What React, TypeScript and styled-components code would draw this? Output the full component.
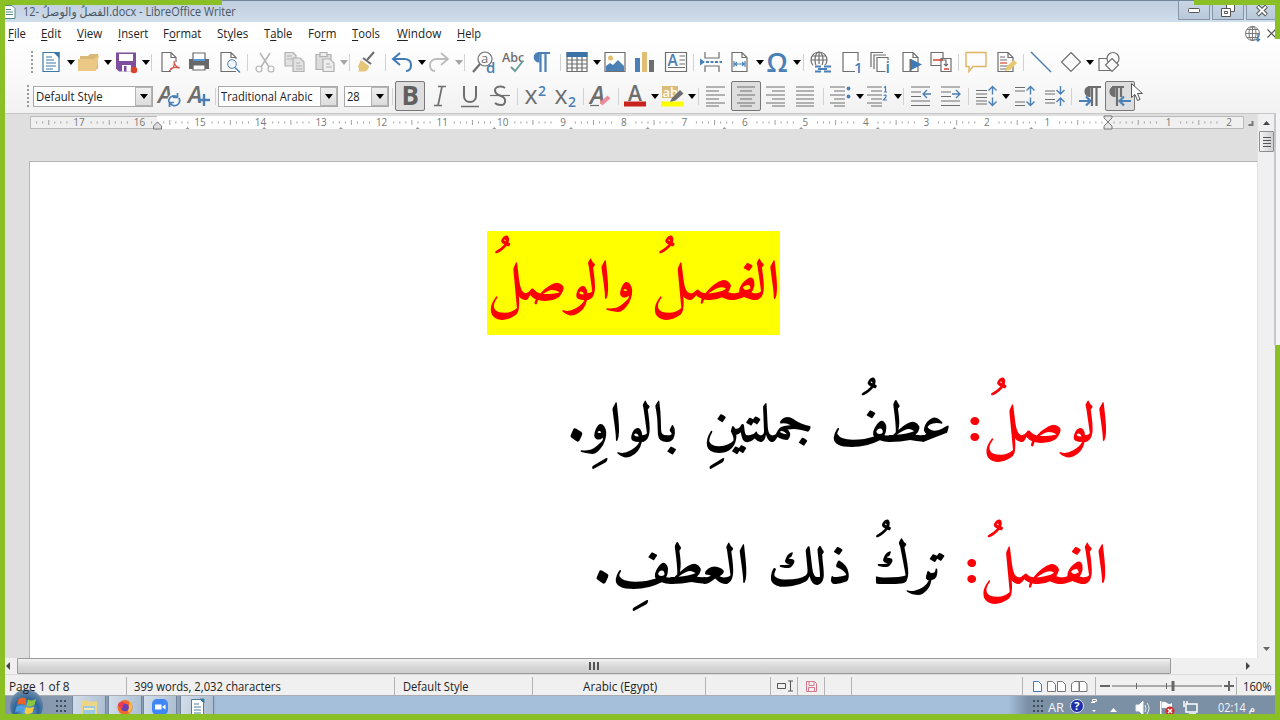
import React, { ReactNode, useLayoutEffect, useRef, useState } from "react";
import styled, { createGlobalStyle, css } from "styled-components";

const GREEN = "#8abf26";
const GREY = "#6e6e6e";
const BLUE = "#4a80b5";

const Global = createGlobalStyle`
  * { box-sizing: border-box; }
  body { margin: 0; background: #fff; overflow: hidden; }
  #root { font-family: "Open Sans", "Noto Sans", "DejaVu Sans", sans-serif; font-size: 12px; color: #222; }
  svg { display: block; overflow: visible; }
`;

/* ---------- text that is squeezed to a given width ---------- */
const FitBox = styled.span<{ $w: number; $rtl?: boolean }>`
  display: inline-block;
  flex: none;
  width: ${(p) => p.$w}px;
  direction: ${(p) => (p.$rtl ? "rtl" : "ltr")};
  white-space: nowrap;
`;
const FitInner = styled.span<{ $rtl?: boolean }>`
  display: inline-block;
  transform-origin: ${(p) => (p.$rtl ? "right" : "left")} center;
`;
const Fit = ({ w, rtl, children }: { w: number; rtl?: boolean; children: ReactNode }) => {
  const ref = useRef<HTMLSpanElement>(null);
  const [scale, setScale] = useState(1);
  useLayoutEffect(() => {
    if (ref.current) setScale(w / ref.current.offsetWidth);
  }, [w]);
  return (
    <FitBox $w={w} $rtl={rtl}>
      <FitInner ref={ref} $rtl={rtl} style={{ transform: `scaleX(${scale})` }}>{children}</FitInner>
    </FitBox>
  );
};

/* ---------- rows whose parts follow each other with measured gaps ---------- */
type Part = { c: number; w: number; el: ReactNode };
const Slot = styled.div<{ $w: number; $gap: number }>`
  flex: none;
  width: ${(p) => p.$w}px;
  margin-left: ${(p) => p.$gap}px;
  display: flex;
  align-items: center;
  justify-content: center;
`;
const Parts = ({ from, parts }: { from: number; parts: Part[] }) => {
  let end = from;
  return (
    <>
      {parts.map((p, i) => {
        const gap = p.c - p.w / 2 - end;
        end = p.c + p.w / 2;
        return <Slot key={i} $w={p.w} $gap={gap}>{p.el}</Slot>;
      })}
    </>
  );
};

/* ---------- window ---------- */
const Screen = styled.div`
  position: relative;
  width: 1280px;
  height: 720px;
  overflow: hidden;
  display: flex;
  flex-direction: column;
  background: #fff;
`;
const Edge = styled.div<{ $t: number; $l: number; $w: number; $h: number }>`
  position: absolute;
  top: ${(p) => p.$t}px;
  left: ${(p) => p.$l}px;
  width: ${(p) => p.$w}px;
  height: ${(p) => p.$h}px;
  background: ${GREEN};
`;
const TitleBar = styled.header`
  flex: none;
  height: 22px;
  border-top: 1px solid #74869a;
  background: linear-gradient(#c0cfdf, #c6d4e4 50%, #cfdeed);
  display: flex;
  padding-left: 5px;
  color: #485563;
  line-height: 22px;
`;
const Caption = styled.div`
  width: 1155px;
  margin-left: 7px;
`;
const WinButton = styled.div<{ $w: number }>`
  width: ${(p) => p.$w}px;
  height: 19px;
  margin-right: 2px;
  border: 1px solid #8797a9;
  border-top: 0;
  background: linear-gradient(#c9d6e4, #b9c9da);
  display: flex;
  align-items: center;
  justify-content: center;
`;
const MenuBar = styled.nav`
  flex: none;
  height: 23px;
  display: flex;
  align-items: center;
  background: #fff;
  u { text-underline-offset: 2px; text-decoration-thickness: 1px; }
`;
const Bars = styled.div`
  flex: none;
  height: 68px;
  background: linear-gradient(#fefefe, #f8f8f8 60%, #f1f1f1);
`;
const ToolBar = styled.div<{ $h: number }>`
  height: ${(p) => p.$h}px;
  display: flex;
  align-items: center;
`;
const Sep = styled.div<{ $h?: number; $c?: string }>`
  width: 1px;
  height: ${(p) => p.$h ?? 17}px;
  background: ${(p) => p.$c ?? "#d2d2d2"};
`;
const Grip = styled.div`
  width: 2px;
  height: 22px;
  background: repeating-linear-gradient(#999 0 2px, transparent 2px 4px);
`;
const Caret = styled.div<{ $off?: boolean }>`
  width: 0;
  height: 0;
  border: 4px solid transparent;
  border-bottom: 0;
  border-top: 5px solid ${(p) => (p.$off ? "#a5a5a5" : "#000")};
`;
const Pressed = styled.div`
  width: 30px;
  height: 30px;
  border: 1px solid #777;
  border-radius: 2px;
  background: #dedede;
  display: flex;
  align-items: center;
  justify-content: center;
`;
const Combo = styled.div<{ $w: number }>`
  width: ${(p) => p.$w}px;
  height: 21px;
  border: 1px solid #a9a9a9;
  background: #fff;
  display: flex;
  align-items: center;
  justify-content: space-between;
  padding-left: 2px;
`;
const ComboButton = styled.div`
  width: 17px;
  height: 19px;
  border: 1px solid #b4b4b4;
  background: linear-gradient(#f0f0f0, #dcdcdc);
  display: flex;
  align-items: center;
  justify-content: center;
`;

/* ---------- workspace ---------- */
const Work = styled.main`
  flex: none;
  height: 545px;
  display: flex;
  padding-left: 5px;
  background: #dfdfdf;
  border-top: 1px solid #c6c6c6;
`;
const Canvas = styled.div`
  width: 1252px;
  display: flex;
  flex-direction: column;
`;
const RulerRow = styled.div`
  height: 14px;
  margin-top: 2px;
  padding-left: 25px;
  display: flex;
`;
const Page = styled.article`
  flex: 1;
  margin: 31px 0 0 24px;
  border: 1px solid #b5b5b5;
  border-width: 1px 0 0 1px;
  background: #fff;
  display: flex;
  flex-direction: column;
`;
const VScroll = styled.div`
  width: 18px;
  background: #f0f0f0;
  border-left: 1px solid #e2e2e2;
  display: flex;
  flex-direction: column;
  align-items: center;
  padding: 7px 0;
`;
const VThumb = styled.div`
  width: 15px;
  height: 21px;
  margin-top: 6px;
  border: 1px solid #8e8e8e;
  border-radius: 1px;
  background: linear-gradient(90deg, #f3f3f3, #cfcfcf);
  display: flex;
  flex-direction: column;
  align-items: center;
  justify-content: center;
  gap: 1px;
  margin-bottom: auto;
`;
const Notch = styled.i<{ $v?: boolean }>`
  display: block;
  ${(p) => (p.$v ? css`width: 2px; height: 8px;` : css`width: 8px; height: 1px; margin: 0.5px;`)}
  background: #555;
`;
const HScroll = styled.div`
  flex: none;
  height: 16px;
  padding-left: 5px;
  background: #f0f0f0;
  display: flex;
  align-items: center;
`;
const HThumb = styled.div`
  width: 1154px;
  height: 16px;
  margin: 0 75px 0 6px;
  border: 1px solid #9a9a9a;
  border-radius: 1px;
  background: linear-gradient(#f1f1f1, #d8d8d8 50%, #cdcdcd);
  display: flex;
  align-items: center;
  justify-content: center;
  gap: 2px;
`;
const StatusBar = styled.footer`
  flex: none;
  height: 22px;
  background: #f0f0f0;
  border-top: 1px solid #dcdcdc;
  border-bottom: 1px solid #a9adb2;
  padding-top: 2px;
  display: flex;
  align-items: center;
`;
const TaskBar = styled.div`
  flex: none;
  height: 24px;
  display: flex;
  align-items: flex-start;
  background: linear-gradient(90deg, #8496ab 0, #8fa3b8 212px, #a5bfda 216px, #a5bfda 1008px, #7b8fa5 1028px, #7b8fa5);
`;
const TaskButton = styled.div`
  width: 34px;
  height: 24px;
  border: 1px solid #71849a;
  border-top: 0;
  background: linear-gradient(100deg, #d3deea, #a9bcd0);
  display: flex;
  align-items: flex-start;
  justify-content: center;
  padding-top: 3px;
`;
const TrayText = styled.span`
  color: #f4f7fa;
  line-height: 21px;
  padding-top: 1px;
`;

/* ---------- document text ---------- */
const DocLine = styled.p<{ $top: number; $right: number; $color: string }>`
  margin: ${(p) => p.$top}px ${(p) => p.$right}px 0 auto;
  height: 104px;
  display: flex;
  flex-direction: row-reverse;
  align-items: flex-start;
  align-self: flex-end;
  color: ${(p) => p.$color};
  font: bold 55px/109px "Traditional Arabic", "Amiri", "Scheherazade", "Noto Naskh Arabic", "DejaVu Sans", serif;
`;
const Highlight = styled.span`
  display: flex;
  flex-direction: row-reverse;
  height: 104px;
  background: #ff0;
`;
const Gap = styled.span<{ $w: number }>`
  flex: none;
  width: ${(p) => p.$w}px;
`;
const Red = styled.span`
  display: flex;
  flex-direction: row-reverse;
  color: #fb0006;
`;

/* ---------- icons ---------- */
const Ico = ({ children, s = GREY }: { children: ReactNode; s?: string }) => (
  <svg width="22" height="22" viewBox="0 0 22 22" fill="none" stroke={s} strokeWidth="1.2">{children}</svg>
);
const T = ({ x, y, size, fill = GREY, weight = 400, style, family, children }: { x: number; y: number; size: number; fill?: string; weight?: number; style?: string; family?: string; children: ReactNode }) => (
  <text x={x} y={y} fontSize={size} fill={fill} stroke="none" fontWeight={weight} fontStyle={style} fontFamily={family ?? "Open Sans"}>{children}</text>
);

const icons: Record<string, ReactNode> = {
  fresh: <Ico s="#3b78a8"><path d="M3 1.500h16v19h-16z" fill="#fff" /><path d="M13 1l6.500 6.500V1z" fill="#3b78a8" stroke="none" /><path d="M6 6h6M6 9h8M6 12h10M6 15h10M6 18h7" /></Ico>,
  open: <Ico s="none"><path d="M2 5h8l2-2h8v15H2z" fill="#d9b878" /><path d="M0 8h16l5-4-3 16H0z" fill="#ecc887" /></Ico>,
  save: <Ico s="none"><path d="M1 1.500h20v19H4l-3-3z" fill="#7d4f9e" /><path d="M4 3h14v7H4zM7 14h9v6.500H7z" fill="#fff" /><path d="M9 15h2.500v5.500H9z" fill="#7d4f9e" /><circle cx="19" cy="19" r="3.300" fill="#d8442e" /></Ico>,
  pdf: <Ico><path d="M11 20.500H2v-19h9l5 5V11M11 1.500v5h5" /><path d="M9 20c4-2 6-6 5-10M14 10c0 4 2 6 6 7M10 18c3-2 6-2 9-1" stroke="#d9534a" /></Ico>,
  print: <Ico s="none"><path d="M1 8h20v10H1z" fill="#696969" /><path d="M5 2h12v7H5z" fill="#fff" stroke="#696969" /><path d="M5 8h12v2H5z" fill="#5b9bd5" /><path d="M5 14h12v5H5z" fill="#fff" stroke="#696969" /></Ico>,
  preview: <Ico><path d="M11 20.500H1v-19h10l5 5V8M11 1.500v5h5M9 20.500h7" /><circle cx="12" cy="13" r="4.300" stroke={BLUE} fill="#f3f8fc" strokeWidth="1" /><path d="M15 16.500l5 5" stroke={BLUE} strokeWidth="1.500" /></Ico>,
  cut: <Ico s="#b5b5b5"><path d="M6 2l9 14M16 2L7 16" strokeWidth="1.500" /><circle cx="5" cy="18" r="3" /><circle cx="17" cy="18" r="3" /></Ico>,
  copy: <Ico s="#b0b0b0"><path d="M1 1.500h8l3 3V15H1z" fill="#e2e2e2" /><path d="M9 7h7l4 4v9.500H9z" fill="#e2e2e2" /><path d="M3 5h5M3 8h5M12 12h4M12 15h6M12 18h6" /></Ico>,
  paste: <Ico s="#b0b0b0"><path d="M2 3.500h15v15H2z" fill="#dcdcdc" /><path d="M6 1.500h7v4H6z" fill="#eee" /><path d="M9 8h7l4 4v8.500H9z" fill="#eee" /><path d="M12 13h4M12 16h6" /></Ico>,
  brush: <Ico s="none"><path d="M19 1l-7 8" stroke={GREY} strokeWidth="2" /><path d="M8 7l8 6" stroke={GREY} strokeWidth="2" /><path d="M6 9l8 6c0 3-2 5-4 5.500H3c2-1 1-3 0-5z" fill="#e5c678" /></Ico>,
  undo: <Ico s="#3f79b6"><path d="M9 2L2 8l7 6M2 8h11c4 0 7 2 7 6s-2 6-5 6" strokeWidth="2" /></Ico>,
  redo: <Ico s="#bcbcbc"><path d="M13 2l7 6-7 6M20 8H9c-4 0-7 2-7 6s2 6 5 6" strokeWidth="1.800" /></Ico>,
  find: <Ico><circle cx="12" cy="8" r="7" /><path d="M7 13l-7 8" strokeWidth="2.200" /><T x={8} y={12} size={13}>a</T><T x={13} y={21.500} size={15} fill={BLUE} weight={600}>d</T></Ico>,
  spell: <Ico><T x={0} y={11} size={12.500} weight={600}>Abc</T><path d="M9 16l4 4 8-10" stroke="#6a9e97" strokeWidth="2" /></Ico>,
  marks: <Ico s={BLUE}><path d="M8 1.500a4.700 4.700 0 0 0 0 9.500z" fill={BLUE} /><path d="M7 2h12M9.500 2v19M14.500 2v19" strokeWidth="2.200" /></Ico>,
  table: <Ico><path d="M1 1.500h20v19H1zM1 9h20M1 13h20M1 17h20M6 5v15.500M11 5v15.500M16 5v15.500" /><path d="M.5 1h21v5H.5z" fill="#3b73a8" stroke="none" /></Ico>,
  image: <Ico><path d="M1 1.500h20v19H1z" fill="#fff" /><circle cx="6.500" cy="7" r="2.500" fill="#e5c06c" stroke="none" /><path d="M2 20v-5l4-3 3 2 5-5 6 6v5z" fill={BLUE} stroke="none" /></Ico>,
  chart: <Ico s="none"><path d="M1 7h5v14H1z" fill={BLUE} /><path d="M8 1h5v20H8z" fill="#e2bd76" /><path d="M15 9h5v12h-5z" fill={GREY} /></Ico>,
  textbox: <Ico><path d="M.5 1.500h21v19H.5z" /><T x={2.500} y={14.500} size={15.500} fill={BLUE} weight={600}>A</T><path d="M14.500 5h5.500M14.500 9h5.500M14.500 13h5.500M3 16.500h17" /></Ico>,
  pbreak: <Ico><path d="M5 1v6h14V1M5 21v-6h14v6" /><path d="M6 11h16" stroke={BLUE} strokeWidth="2" strokeDasharray="3 1.500" /><path d="M0 7.500L5 11l-5 3.500z" fill={BLUE} stroke="none" /></Ico>,
  field: <Ico><path d="M3 1.500h10l5 5v14H3zM13 1.500v5h5" fill="#fff" /><path d="M5 10v6M16 10v6M6 13h9M8 11l-2 2 2 2M13 11l2 2-2 2" stroke={BLUE} /></Ico>,
  omega: <Ico><T x={0.500} y={21} size={27} fill={BLUE} weight={600}>Ω</T></Ico>,
  link: <Ico><circle cx="9" cy="9" r="8" /><ellipse cx="9" cy="9" rx="4" ry="8" /><path d="M1 9h16M2 5h14M9 1v12" /><path d="M3 14h18v8H3z" fill="#fcfcfc" stroke="none" /><path d="M11 15.500H5M11 20.500H5M14 15.500h7M14 20.500h7M8 18h9" stroke={BLUE} strokeWidth="1.800" /></Ico>,
  footnote: <Ico><path d="M3 1.500h15v19H3z" fill="#fff" /><path d="M15 10h6v12h-6z" fill="#fcfcfc" stroke="none" /><T x={14} y={21.500} size={15} fill={BLUE} weight={600}>1</T></Ico>,
  endnote: <Ico><path d="M2 16V1.500h12M5 18V4h12" /><path d="M8 6.500h11v14H8z" fill="#fff" /><path d="M16.500 9h5v13h-5z" fill="#fcfcfc" stroke="none" /><T x={16.500} y={21.500} size={16} fill={BLUE} weight={600}>i</T></Ico>,
  bookmark: <Ico><path d="M3 1.500h10l5 5v14H3zM13 1.500v5h5" fill="#fff" /><path d="M10.500 8v13" strokeWidth="2" /><path d="M11 8l11 5.500L11 19z" fill="#3f79b6" stroke="none" /></Ico>,
  xref: <Ico><path d="M1 1.500h12v13H1z" /><path d="M11 7.500h10v13H11z" fill="#fff" /><path d="M3 9h10M14 18h5" stroke="#d8442e" strokeWidth="1.500" /><path d="M11 9h5v6M14 13l2 2 2-2" /></Ico>,
  comment: <Ico s="#e0b560"><path d="M1 1.500h20v14H8l-4 5v-5H1z" strokeWidth="1.400" /></Ico>,
  track: <Ico><path d="M2 1.500h10l5 5v14H2zM12 1.500v5h5" fill="#fff" /><path d="M4 6h5M4 9h7M4 15h8M4 18h6" /><path d="M4 12h7" stroke="#d8442e" /><path d="M9 20l2-5 7-6 3 3-7 7z" fill="#e8c870" stroke="none" /></Ico>,
  line: <Ico s={BLUE}><path d="M1 1l20 20" strokeWidth="1.500" /></Ico>,
  shape: <Ico><path d="M11 1.500l9.500 9.500-9.500 9.500L1.500 11z" /></Ico>,
  shapes: <Ico><path d="M1 7.500h12v12H1z" /><circle cx="15" cy="7.500" r="6" fill="#fbfbfb" /><path d="M14 7.500l6.500 6.500-6.500 6.500-6.500-6.500z" fill="#fbfbfb" /></Ico>,
  styleUpd: <Ico><T x={0} y={18} size={24} weight={600} style="italic">A</T><circle cx="16" cy="15" r="6.500" fill="#f9f9f9" stroke="none" /><path d="M11 17a5 5 0 0 1 8-5M21 13a5 5 0 0 1-9 5M19.500 8v4.500H15M11.500 22v-4.500H16" stroke={BLUE} strokeWidth="1.700" /></Ico>,
  styleNew: <Ico><T x={0} y={18} size={24} weight={600} style="italic">A</T><path d="M16 9v12M10 15h12" stroke={BLUE} strokeWidth="2.400" /></Ico>,
  bold: <Ico><T x={2.500} y={20} size={26} weight={700} fill="#606060">B</T></Ico>,
  italic: <Ico><path d="M9 1.500h8M5 20.500h8M13 1.500l-4 19" strokeWidth="1.700" /></Ico>,
  under: <Ico><path d="M5 1v10c0 8 12 8 12 0V1" strokeWidth="2" /><path d="M2 21.500h18" strokeWidth="1.500" /></Ico>,
  strike: <Ico><path d="M16 3c-3-2.500-10-2-10 2.500 0 3 3 4.500 6 5.500 6 2 5 9 0 9-3 0-5-1-6-2" strokeWidth="2" /><path d="M1 10.500h20" /></Ico>,
  sup: <Ico><T x={-0.500} y={18.500} size={25}>x</T><T x={13} y={10.500} size={14} fill={BLUE} weight={600}>2</T></Ico>,
  sub: <Ico><T x={-0.500} y={18.500} size={25}>x</T><T x={13} y={22} size={14} fill={BLUE} weight={600}>2</T></Ico>,
  clear: <Ico><T x={1} y={19} size={25} weight={600} style="italic">A</T><path d="M12 19l8-7" stroke="#ec8b9d" strokeWidth="4" /><path d="M1 20.500h9" /></Ico>,
  fcolor: <Ico><T x={4} y={15.500} size={21} weight={600}>A</T><path d="M0 16.500h22v5H0z" fill="#c9211e" stroke="none" /></Ico>,
  hilite: <Ico><path d="M1 1h16v12H1z" fill="#dcbb74" stroke="none" /><T x={1.500} y={12} size={13} fill="#fff" weight={600}>ab</T><path d="M0 16.500h23v5H0z" fill="#ff0" stroke="none" /><path d="M9 17l2-4 8-8 3.500 3.500-8 7z" fill={GREY} stroke="none" /></Ico>,
  left: <Ico><path d="M1 2h19M1 6h13M1 10h19M1 14h13M1 18h19M1 21h13" strokeWidth="1.200" /></Ico>,
  center: <Ico><path d="M2 2h18M5 6h12M2 10h18M5 14h12M2 18h18M5 21h12" strokeWidth="1.200" /></Ico>,
  right: <Ico><path d="M2 2h19M8 6h13M2 10h19M8 14h13M2 18h19M8 21h13" strokeWidth="1.200" /></Ico>,
  justify: <Ico><path d="M2 2h18M2 6h18M2 10h18M2 14h18M2 18h18M2 21h18" strokeWidth="1.200" /></Ico>,
  bullets: <Ico><path d="M0 2h15M4 6h11M0 10h15M4 14h11M0 18h15M4 21h11" strokeWidth="1.200" /><circle cx="18.500" cy="3.500" r="1.900" fill={BLUE} stroke="none" /><circle cx="18.500" cy="11.500" r="1.900" fill={BLUE} stroke="none" /></Ico>,
  numbers: <Ico><path d="M0 2h15M4 6h11M0 10h15M4 14h11M0 18h15M4 21h11" strokeWidth="1.200" /><path d="M17 2.500l1.500-1v5.500M17 7h3M16.500 10.500q3.500-1 2.500 1.500l-2.500 3h3.500" stroke={BLUE} /></Ico>,
  dec: <Ico><path d="M1 2h19M1 7h10M1 11.500h10M1 16h19M1 20.500h19" strokeWidth="1.200" /><path d="M21 9h-8M17 5l-4 4 4 4" stroke={BLUE} strokeWidth="1.300" /></Ico>,
  inc: <Ico><path d="M1 2h19M1 7h10M1 11.500h10M1 16h19M1 20.500h19" strokeWidth="1.200" /><path d="M12 9h8M16 5l4 4-4 4" stroke={BLUE} strokeWidth="1.300" /></Ico>,
  lspace: <Ico><path d="M1 5.500h11M1 9h11M1 12.500h11M1 16h11M1 19h11" strokeWidth="1.200" /><path d="M17.500 1.500v8M13.500 5.500l4-4 4 4M17.500 20.500v-8M13.500 16.500l4 4 4-4" stroke={BLUE} strokeWidth="1.400" /></Ico>,
  pinc: <Ico><path d="M0 2.500h10M0 6h10M0 17h10M0 20.500h10" strokeWidth="1.200" /><path d="M15.500 1.500v8M11.500 5.500l4-4 4 4M15.500 20.500v-8M11.500 16.500l4 4 4-4" stroke={BLUE} strokeWidth="1.400" /></Ico>,
  pdec: <Ico><path d="M0 6h10M0 9h10M0 14.500h10M0 18h10" strokeWidth="1.200" /><path d="M15.500 1v8M11.500 5l4 4 4-4M15.500 21v-8M11.500 17l4-4 4 4" stroke={BLUE} strokeWidth="1.400" /></Ico>,
  ltr: <Ico><path d="M11 1.500a5 5 0 0 0 0 10z" fill={GREY} /><path d="M9 2h13M13 2v19M17.500 2v19" strokeWidth="2.200" /><path d="M0 16h11M7 11.500l4.500 4.500L7 20.500" stroke={BLUE} strokeWidth="2.200" /></Ico>,
  rtl: <Ico><path d="M6 1.500a5 5 0 0 0 0 10z" fill={GREY} /><path d="M3 2h12M8 2v19M12 2v10" strokeWidth="2.200" /><path d="M22 16H11M15 11.500L10.500 16l4.500 4.500" stroke={BLUE} strokeWidth="2.200" /></Ico>,
};

const ic = (c: number, name: string): Part => ({ c, w: 22, el: icons[name] });
const down = (c: number, off = false): Part => ({ c, w: 8, el: <Caret $off={off} /> });
const bar = (c: number): Part => ({ c, w: 1, el: <Sep /> });
const on = (c: number, name: string): Part => ({ c, w: 30, el: <Pressed>{icons[name]}</Pressed> });
const combo = (c: number, w: number, text: string, tw: number): Part => ({
  c, w,
  el: <Combo $w={w}><Fit w={tw}>{text}</Fit><ComboButton><Caret /></ComboButton></Combo>,
});

const standard: Part[] = [
  { c: 32, w: 2, el: <Grip /> },
  ic(51, "fresh"), down(71), ic(89, "open"), down(108), ic(126, "save"), down(145.500), bar(151.500),
  ic(171, "pdf"), ic(199, "print"), ic(231, "preview"), bar(247.500),
  ic(265, "cut"), ic(295, "copy"), ic(325, "paste"), down(343.500, true), bar(349.500),
  ic(366, "brush"), bar(385.500), ic(402, "undo"), down(421.500), ic(439, "redo"), down(459, true), bar(464.500),
  ic(484, "find"), ic(513, "spell"), ic(542, "marks"), bar(560.500),
  ic(577, "table"), down(597), ic(615, "image"), ic(645, "chart"), ic(676, "textbox"), bar(693.500),
  ic(711, "pbreak"), ic(740, "field"), down(759.500), ic(777, "omega"), down(797), bar(803.500),
  ic(821, "link"), ic(851, "footnote"), ic(880, "endnote"), ic(911, "bookmark"), ic(941, "xref"), bar(958.500),
  ic(976, "comment"), ic(1007, "track"), bar(1023.500), ic(1041, "line"), ic(1071, "shape"), down(1090), ic(1109, "shapes"),
];
const formatting: Part[] = [
  { c: 28, w: 2, el: <Grip /> },
  combo(93, 120, "Default Style", 67), ic(169, "styleUpd"), ic(199, "styleNew"), bar(215.500),
  combo(278, 120, "Traditional Arabic", 92), combo(366.500, 45, "28", 13), bar(392.500),
  on(410, "bold"), ic(440, "italic"), ic(470, "under"), ic(500, "strike"), bar(517.500),
  ic(536, "sup"), ic(566, "sub"), bar(583.500), ic(600, "clear"), bar(618.500),
  ic(635, "fcolor"), down(654.500), ic(672, "hilite"), down(692), bar(698.500),
  ic(716, "left"), on(746, "center"), ic(775, "right"), ic(805, "justify"), bar(823.500),
  ic(841, "bullets"), down(860), ic(878, "numbers"), down(897.500), bar(903.500),
  ic(921, "dec"), ic(951, "inc"), bar(968.500), ic(986, "lspace"), down(1005.500),
  ic(1026, "pinc"), ic(1056, "pdec"), bar(1071.500), ic(1090, "ltr"), on(1120, "rtl"),
];

const menu = (l: number, r: number, pre: string, key: string, post: string): Part => ({
  c: (l + r) / 2, w: r - l, el: <Fit w={r - l}>{pre}<u>{key}</u>{post}</Fit>,
});
const menus: Part[] = [
  menu(8, 26, "", "F", "ile"), menu(41, 61, "", "E", "dit"), menu(77, 102, "", "V", "iew"), menu(118, 148, "", "I", "nsert"),
  menu(163, 201, "F", "o", "rmat"), menu(217, 248, "St", "y", "les"), menu(264, 292, "T", "a", "ble"), menu(308, 336, "Fo", "r", "m"),
  menu(352, 380, "", "T", "ools"), menu(397, 441, "", "W", "indow"), menu(457, 481, "", "H", "elp"),
  { c: 1253, w: 16, el: <svg width="16" height="16" viewBox="0 0 16 16" fill="none" stroke="#777"><circle cx="7.500" cy="7.500" r="7" /><ellipse cx="7.500" cy="7.500" rx="3.500" ry="7" /><path d="M.5 7.500h14M2 3.500h11M2 11.500h11M7.500 .5v14" /><path d="M13 8v7M11 13l2 2 2-2" stroke={BLUE} strokeWidth="1.500" /></svg> },
  { c: 1271, w: 9, el: <svg width="9" height="9" viewBox="0 0 9 9" stroke="#555" strokeWidth="1.200"><path d="M.5 .5l8 8M8.500 .5l-8 8" /></svg> },
];

/* ---------- ruler ---------- */
const STEP = 60.53;
const ORIGIN = 1078;
const Ruler = () => {
  const marks: ReactNode[] = [];
  for (let n = -2; n <= 17; n++) {
    const x = ORIGIN - n * STEP;
    if (n !== 0) marks.push(<text key={`n${n}`} x={x} y={10} textAnchor="middle" fontSize="10" fill="#777">{Math.abs(n)}</text>);
    for (let k = 1; k < 10; k++) {
      const tx = x - (k * STEP) / 10;
      const nearText = n !== 0 && k === 1;
      const nearNext = n !== -1 && k === 9;
      if (tx > 2 && !nearText && !nearNext) marks.push(<path key={`t${n}-${k}`} d={k === 5 ? `M${tx} 4v5` : `M${tx} 5.500v2`} stroke="#a0a0a0" />);
    }
  }
  for (let x = 157.500; x < ORIGIN; x += 76.700) marks.push(<path key={`s${x}`} d={`M${x - 2} 13l2-2 2 2z`} fill="#999" />);
  return (
    <svg width="1220" height="14" viewBox="0 0 1220 14">
      <path d="M.5 .5h1213v12H.5z" fill="#f0f0f0" stroke="#b9b9b9" />
      <path d="M127 0h951v13H127z" fill="#fff" />
      {marks}
      <path d="M123.500 13v-3l4-4 4 4v3z" fill="#ddd" stroke="#777" />
      <path d="M1074 0h8v2l-4 4-4-4zM1074 13v-3l4-4 4 4v3z" fill="#e8e8e8" stroke="#777" />
      <path d="M1222.500 5v4h-4" fill="none" stroke="#777" strokeWidth="2" />
    </svg>
  );
};

/* ---------- status bar and task bar ---------- */
const word = (l: number, r: number, text: string): Part => ({ c: (l + r) / 2, w: r - l, el: <Fit w={r - l}>{text}</Fit> });
const div = (c: number): Part => ({ c, w: 1, el: <Sep $h={18} $c="#b4b4b4" /> });
const pageShape = "M.5 .5h5l3 3v7h-8z";
const status: Part[] = [
  word(9, 69, "Page 1 of 8"), div(126.500), word(134, 281, "399 words, 2,032 characters"), div(394.500),
  word(403, 469, "Default Style"), div(532.500), word(583, 657, "Arabic (Egypt)"), div(705.500), div(770.500),
  { c: 785.500, w: 17, el: <svg width="17" height="12" viewBox="0 0 17 12" fill="none" stroke="#555"><path d="M.5 3.500h8v5h-8zM11 1h5M11 11h5M13.500 1v10" /></svg> },
  div(797.500),
  { c: 811.500, w: 11, el: <svg width="11" height="11" viewBox="0 0 11 11" fill="none" stroke="#d4788c"><path d="M.5 .5h8l2 2v8H.5zM3 .5v4h5v-4M2.500 10.500v-4h6v4" /></svg> },
  div(824.500), div(851.500), div(1022.500),
  { c: 1037, w: 9, el: <svg width="9" height="11" viewBox="0 0 9 11" fill="#fff" stroke="#3f79b6"><path d={pageShape} /></svg> },
  { c: 1056, w: 19, el: <svg width="19" height="11" viewBox="0 0 19 11" fill="#fff" stroke="#777"><path d={pageShape} /><path d="M10.500 .5h5l3 3v7h-8z" /></svg> },
  { c: 1079.500, w: 17, el: <svg width="17" height="11" viewBox="0 0 17 11" fill="#fff" stroke="#777"><path d="M3 .5h5v10H.5V3zM8.500 .5h5L16 3v7.500H8.500z" /></svg> },
  div(1095.500),
  { c: 1167, w: 134, el: <svg width="134" height="12" viewBox="0 0 134 12" stroke="#666"><path d="M0 6h10M124 6h10M129 1v10" strokeWidth="2" /><path d="M12 6h110M36.500 3v6M66.500 3v6" /><path d="M71.500 1h3v10h-3z" fill="#666" stroke="none" /></svg> },
  div(1236.500), word(1243, 1272, "160%"),
];
const dots = <svg width="10" height="18" viewBox="0 0 10 18" stroke="#2c3440" strokeWidth="1.500" strokeDasharray="2 2"><path d="M0 5h10M0 10h10M0 15h10" /></svg>;
const task: Part[] = [
  { c: 26.500, w: 33, el: <svg width="33" height="24" viewBox="0 0 33 24"><defs><radialGradient id="orb" cx=".5" cy=".65" r=".6"><stop offset="0" stopColor="#7fb8e6" /><stop offset=".6" stopColor="#2d6498" /><stop offset="1" stopColor="#6d8ba8" /></radialGradient></defs><circle cx="16.500" cy="10" r="16.500" fill="url(#orb)" /><path d="M8.500 3q4-3 8 0l-1.500 6q-4-2-8 0z" fill="#e8642c" /><path d="M18 3.500q4 2 8-.5l-1.500 6q-4 2.500-8 .5z" fill="#8cc63e" /><path d="M6.500 10.500q4-2.500 8 0l-1.500 6q-4-2.500-8 0z" fill="#4ea0e0" /><path d="M16 11q4 2 8-.5l-1.500 6q-4 2.500-8 .5z" fill="#f8ca3c" /></svg> },
  { c: 61, w: 10, el: dots },
  { c: 89, w: 34, el: <TaskButton><svg width="18" height="18" viewBox="0 0 18 18"><path d="M1 2l6-1 2 2 8-1v14H1z" fill="#ecd584" /><path d="M3 7h12v9H3z" fill="#9cc8e4" /><path d="M4 9h10v2H4z" fill="#f6eab4" /></svg></TaskButton> },
  { c: 125, w: 34, el: <TaskButton><svg width="16" height="16" viewBox="0 0 16 16"><circle cx="8" cy="8.500" r="7.500" fill="#f4692c" /><path d="M12 1c4 4 4 10 0 13-3-2 2-8 0-13z" fill="#fdbc3c" /><circle cx="8" cy="8.500" r="3.800" fill="#6c3fb8" /><path d="M1 5c3-3 7-2 8 0-3 0-4 2-3 4-3 0-5-1-5-4z" fill="#e83d55" /></svg></TaskButton> },
  { c: 160, w: 34, el: <TaskButton><svg width="16" height="16" viewBox="0 0 16 16"><rect width="16" height="16" rx="5" fill="#4087f5" /><path d="M3 5.500h6.500v5H3zM10.500 7.500l3-2v5l-3-2z" fill="#fff" /></svg></TaskButton> },
  { c: 197, w: 34, el: <TaskButton><svg width="13" height="17" viewBox="0 0 13 17" fill="#fff" stroke="#4a7f9c"><path d="M.5 .5h9l3 3v13H.5z" /><path d="M9 0h4v4z" fill="#237a9c" /><path d="M3 5h5M3 8h7M3 11h7M3 14h7" /></svg></TaskButton> },
  { c: 1038, w: 10, el: dots },
  { c: 1056, w: 16, el: <TrayText><Fit w={16}>AR</Fit></TrayText> },
  { c: 1077, w: 14, el: <svg width="14" height="18" viewBox="0 0 14 18"><circle cx="7" cy="10" r="6.500" fill="#1c2fa8" stroke="#dce4f4" /><text x="4.200" y="14" fontSize="11" fontWeight="700" fill="#fff">?</text></svg> },
  { c: 1094, w: 6, el: <svg width="6" height="18" viewBox="0 0 6 18" fill="none" stroke="#fff"><path d="M1.500 3.500h4v2h-4zM0 6.500h4" /><path d="M1 14h4l-2 2z" fill="#fff" stroke="none" /></svg> },
  { c: 1113.500, w: 7, el: <svg width="7" height="20" viewBox="0 0 7 20"><path d="M0 16l3.500-4L7 16z" fill="#fff" /></svg> },
  { c: 1142, w: 15, el: <svg width="15" height="22" viewBox="0 0 15 22" fill="none" stroke="#e8eef4"><path d="M1 9h3l4-4v14l-4-4H1z" fill="#fff" /><path d="M10 9q2 4 0 7M12 7q4 5 0 11" /></svg> },
  { c: 1166.500, w: 15, el: <svg width="15" height="20" viewBox="0 0 15 20"><path d="M1 5h1.500v14H1z" fill="#fff" /><path d="M3 6q3-1 5 1t5 0v6q-3 2-5 0t-5-1z" fill="#fff" /><circle cx="11" cy="15" r="4.500" fill="#d02a2a" /><path d="M9 13l4 4M13 13l-4 4" stroke="#fff" strokeWidth="1.500" /></svg> },
  { c: 1190, w: 15, el: <svg width="15" height="20" viewBox="0 0 15 20" fill="none" stroke="#fff" strokeWidth="1.500"><path d="M3 8h11v8H3zM6 18h7M1 5v6M4 5v3" /></svg> },
  { c: 1236.500, w: 37, el: <TrayText><Fit w={37}>02:14 م</Fit></TrayText> },
];

const MousePointer = styled.div`
  position: absolute;
  left: 1131px;
  top: 83px;
`;
const RightStrip = styled.div`
  position: absolute;
  left: 1274px;
  top: 113px;
  width: 6px;
  height: 232px;
  background: #f4f4f4;
  border-left: 2px solid #c4c8cc;
`;

export default function App() {
  return (
    <Screen>
      <Global />
      <TitleBar>
        <svg width="11" height="20" viewBox="0 0 11 20" fill="#fff" stroke="#568a8a"><path d="M-1 4.500h8l3 3v10H-1z" /><path d="M1 8.500h5M1 11h7M1 13.500h7" /></svg>
        <Caption><Fit w={213}>12- الفصلُ والوصلُ.docx - LibreOffice Writer</Fit></Caption>
        <WinButton $w={32}><svg width="12" height="5" viewBox="0 0 12 5"><rect x=".5" y=".5" width="11" height="4" rx="1" fill="#fff" stroke="#555" /></svg></WinButton>
        <WinButton $w={32}><svg width="14" height="13" viewBox="0 0 14 13" fill="#fff" stroke="#555"><path d="M5.500 .5h8v7h-8z" /><path d="M.5 4.500h9v8h-9zM3.500 7.500h3v2h-3z" /></svg></WinButton>
        <WinButton $w={32}><svg width="12" height="11" viewBox="0 0 12 11"><path d="M1.500 1l9 9M10.500 1l-9 9" stroke="#555" strokeWidth="4" /><path d="M2 1.500l8 8M10 1.500l-8 8" stroke="#fff" strokeWidth="2" /></svg></WinButton>
      </TitleBar>
      <MenuBar><Parts from={0} parts={menus} /></MenuBar>
      <Bars>
        <ToolBar $h={34}><Parts from={0} parts={standard} /></ToolBar>
        <ToolBar $h={34}><Parts from={0} parts={formatting} /></ToolBar>
      </Bars>
      <Work>
        <Canvas>
          <RulerRow><Ruler /></RulerRow>
          <Page>
            <DocLine $top={69} $right={477} $color="#fb0006">
              <Highlight><Fit rtl w={129}>الفصلُ</Fit><Gap $w={16} /><Fit rtl w={148}>والوصلُ</Fit></Highlight>
            </DocLine>
            <DocLine $top={38} $right={148} $color="#000">
              <Red><Fit rtl w={142}>الوصلُ:</Fit></Red><Gap $w={15} />
              <Fit rtl w={122}>عطفُ</Fit><Gap $w={17} /><Fit rtl w={109}>جملتينِ</Fit><Gap $w={26} /><Fit rtl w={111}>بالواوِ.</Fit>
            </DocLine>
            <DocLine $top={38} $right={148} $color="#000">
              <Red><Fit rtl w={145}>الفصلُ:</Fit></Red><Gap $w={16} />
              <Fit rtl w={75}>تركُ</Fit><Gap $w={20} /><Fit rtl w={85}>ذلك</Fit><Gap $w={18} /><Fit rtl w={157}>العطفِ.</Fit>
            </DocLine>
          </Page>
        </Canvas>
        <VScroll>
          <svg width="7" height="4" viewBox="0 0 7 4"><path d="M0 4l3.500-4L7 4z" fill="#444" /></svg>
          <VThumb><Notch /><Notch /><Notch /><Notch /></VThumb>
          <svg width="7" height="4" viewBox="0 0 7 4"><path d="M0 0l3.500 4L7 0z" fill="#666" /></svg>
        </VScroll>
      </Work>
      <HScroll>
        <svg width="6" height="8" viewBox="0 0 6 8"><path d="M5 0v8L1 4z" fill="#444" /></svg>
        <HThumb><Notch $v /><Notch $v /><Notch $v /></HThumb>
        <svg width="4" height="8" viewBox="0 0 4 8"><path d="M0 0v8l4-4z" fill="#444" /></svg>
      </HScroll>
      <StatusBar><Parts from={0} parts={status} /></StatusBar>
      <TaskBar><Parts from={0} parts={task} /></TaskBar>
      <RightStrip />
      <MousePointer>
        <svg width="14" height="20" viewBox="0 0 14 20"><path d="M.5 .5v14l3.500-3 2.500 6 2.500-1-2.500-6h5z" fill="#fff" stroke="#555" /></svg>
      </MousePointer>
      <Edge $t={0} $l={0} $w={222} $h={5} />
      <Edge $t={0} $l={0} $w={5} $h={720} />
      <Edge $t={0} $l={1194} $w={86} $h={5} />
      <Edge $t={0} $l={1275} $w={5} $h={39} />
      <Edge $t={345} $l={1275} $w={5} $h={375} />
      <Edge $t={714} $l={0} $w={1280} $h={6} />
    </Screen>
  );
}
